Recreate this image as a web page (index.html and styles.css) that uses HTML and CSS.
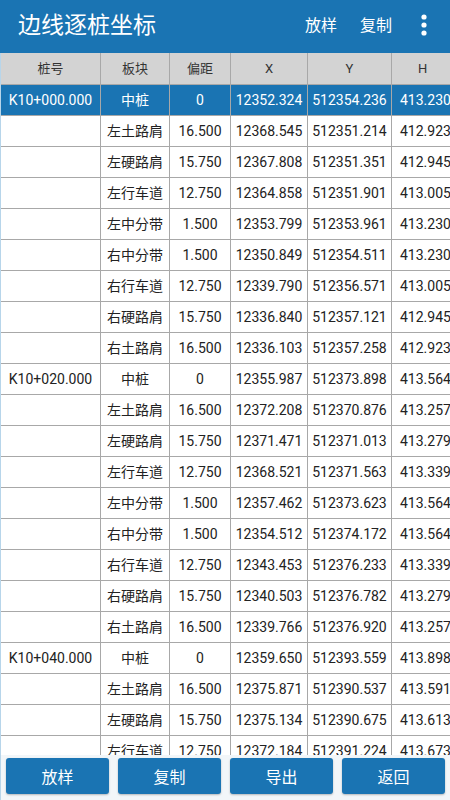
FILE: index.html
```html
<!DOCTYPE html>
<html lang="zh">
<head>
<meta charset="utf-8">
<title>边线逐桩坐标</title>
<link rel="stylesheet" href="styles.css">
</head>
<body>
<div class="app">
  <header class="appbar">
    <div class="title">边线逐桩坐标</div>
    <div class="actions">
      <span class="action">放样</span>
      <span class="action">复制</span>
      <svg class="kebab" width="20" height="28" viewBox="0 0 20 28"><circle cx="10" cy="6" r="2.6" fill="#fff"/><circle cx="10" cy="14" r="2.6" fill="#fff"/><circle cx="10" cy="22" r="2.6" fill="#fff"/></svg>
    </div>
  </header>
  <div class="tablewrap">
    <table class="grid">
      <colgroup>
        <col class="c1"><col class="c2"><col class="c3"><col class="c4"><col class="c5"><col class="c6">
      </colgroup>
      <thead>
        <tr><th>桩号</th><th>板块</th><th>偏距</th><th>X</th><th>Y</th><th>H</th></tr>
      </thead>
      <tbody>
        <tr class="sel"><td>K10+000.000</td><td>中桩</td><td>0</td><td>12352.324</td><td>512354.236</td><td>413.230</td></tr>
        <tr><td></td><td>左土路肩</td><td>16.500</td><td>12368.545</td><td>512351.214</td><td>412.923</td></tr>
        <tr><td></td><td>左硬路肩</td><td>15.750</td><td>12367.808</td><td>512351.351</td><td>412.945</td></tr>
        <tr><td></td><td>左行车道</td><td>12.750</td><td>12364.858</td><td>512351.901</td><td>413.005</td></tr>
        <tr><td></td><td>左中分带</td><td>1.500</td><td>12353.799</td><td>512353.961</td><td>413.230</td></tr>
        <tr><td></td><td>右中分带</td><td>1.500</td><td>12350.849</td><td>512354.511</td><td>413.230</td></tr>
        <tr><td></td><td>右行车道</td><td>12.750</td><td>12339.790</td><td>512356.571</td><td>413.005</td></tr>
        <tr><td></td><td>右硬路肩</td><td>15.750</td><td>12336.840</td><td>512357.121</td><td>412.945</td></tr>
        <tr><td></td><td>右土路肩</td><td>16.500</td><td>12336.103</td><td>512357.258</td><td>412.923</td></tr>
        <tr><td>K10+020.000</td><td>中桩</td><td>0</td><td>12355.987</td><td>512373.898</td><td>413.564</td></tr>
        <tr><td></td><td>左土路肩</td><td>16.500</td><td>12372.208</td><td>512370.876</td><td>413.257</td></tr>
        <tr><td></td><td>左硬路肩</td><td>15.750</td><td>12371.471</td><td>512371.013</td><td>413.279</td></tr>
        <tr><td></td><td>左行车道</td><td>12.750</td><td>12368.521</td><td>512371.563</td><td>413.339</td></tr>
        <tr><td></td><td>左中分带</td><td>1.500</td><td>12357.462</td><td>512373.623</td><td>413.564</td></tr>
        <tr><td></td><td>右中分带</td><td>1.500</td><td>12354.512</td><td>512374.172</td><td>413.564</td></tr>
        <tr><td></td><td>右行车道</td><td>12.750</td><td>12343.453</td><td>512376.233</td><td>413.339</td></tr>
        <tr><td></td><td>右硬路肩</td><td>15.750</td><td>12340.503</td><td>512376.782</td><td>413.279</td></tr>
        <tr><td></td><td>右土路肩</td><td>16.500</td><td>12339.766</td><td>512376.920</td><td>413.257</td></tr>
        <tr><td>K10+040.000</td><td>中桩</td><td>0</td><td>12359.650</td><td>512393.559</td><td>413.898</td></tr>
        <tr><td></td><td>左土路肩</td><td>16.500</td><td>12375.871</td><td>512390.537</td><td>413.591</td></tr>
        <tr><td></td><td>左硬路肩</td><td>15.750</td><td>12375.134</td><td>512390.675</td><td>413.613</td></tr>
        <tr><td></td><td>左行车道</td><td>12.750</td><td>12372.184</td><td>512391.224</td><td>413.673</td></tr>
      </tbody>
    </table>
  </div>
  <footer class="bottombar">
    <button class="btn">放样</button>
    <button class="btn">复制</button>
    <button class="btn">导出</button>
    <button class="btn">返回</button>
  </footer>
</div>
</body>
</html>
```
FILE: styles.css
```css
* { box-sizing: border-box; }
html, body {
  margin: 0;
  padding: 0;
  width: 450px;
  height: 800px;
  overflow: hidden;
  font-family: Roboto, "Noto Sans CJK SC", sans-serif;
  background: #f2f6f9;
}
.app {
  display: flex;
  flex-direction: column;
  width: 450px;
  height: 800px;
}
.appbar {
  flex: 0 0 53px;
  background: #1a74b3;
  display: flex;
  align-items: center;
  justify-content: space-between;
  padding: 0 16px 0 18px;
  color: #fff;
}
.title {
  font-size: 23px;
  line-height: 1;
  margin-top: -2px;
}
.actions {
  display: flex;
  align-items: center;
}
.action {
  font-size: 16px;
  margin-right: 23px;
  line-height: 1;
  margin-top: -2px;
}
.action:last-of-type { margin-right: 22px; }
.kebab { display: block; margin-top: -3px; }
.tablewrap {
  flex: 1 1 auto;
  overflow: hidden;
  background: #fff;
  border-left: 1px solid #b7d5ea;
}
.grid {
  border-collapse: collapse;
  table-layout: fixed;
  width: 470px;
  font-size: 14px;
  color: #222;
  margin-left: -1px;
}
.c1 { width: 100px; }
.c2 { width: 69px; }
.c3 { width: 61px; }
.c4 { width: 77px; }
.c5 { width: 84px; }
.c6 { width: 79px; }
.grid th, .grid td {
  border: 1px solid #a8a8a8;
  height: 31px;
  padding: 0;
  text-align: center;
  white-space: nowrap;
  overflow: hidden;
  line-height: 1;
}
.grid th {
  background: #d3d3d3;
  font-weight: normal;
  font-size: 13px;
  color: #333;
  border-top: none;
}
.grid tr.sel td {
  background: #1a74b3;
  color: #fff;
}
.grid td:last-child { text-align: left; padding-left: 8px; }
.grid th:last-child { text-align: left; padding-left: 26px; }
.bottombar {
  flex: 0 0 45px;
  display: flex;
  gap: 9px;
  padding: 3px 5px 6px 5px;
  background: #f2f6f9;
  border-left: 1px solid #b7d5ea;
}
.btn {
  flex: 1 1 0;
  border: none;
  border-radius: 3px;
  background: #1a74b3;
  color: #fff;
  font-family: Roboto, "Noto Sans CJK SC", sans-serif;
  font-size: 16px;
  padding: 0;
  box-shadow: 0 1px 2px rgba(0,0,0,0.25);
}
```
